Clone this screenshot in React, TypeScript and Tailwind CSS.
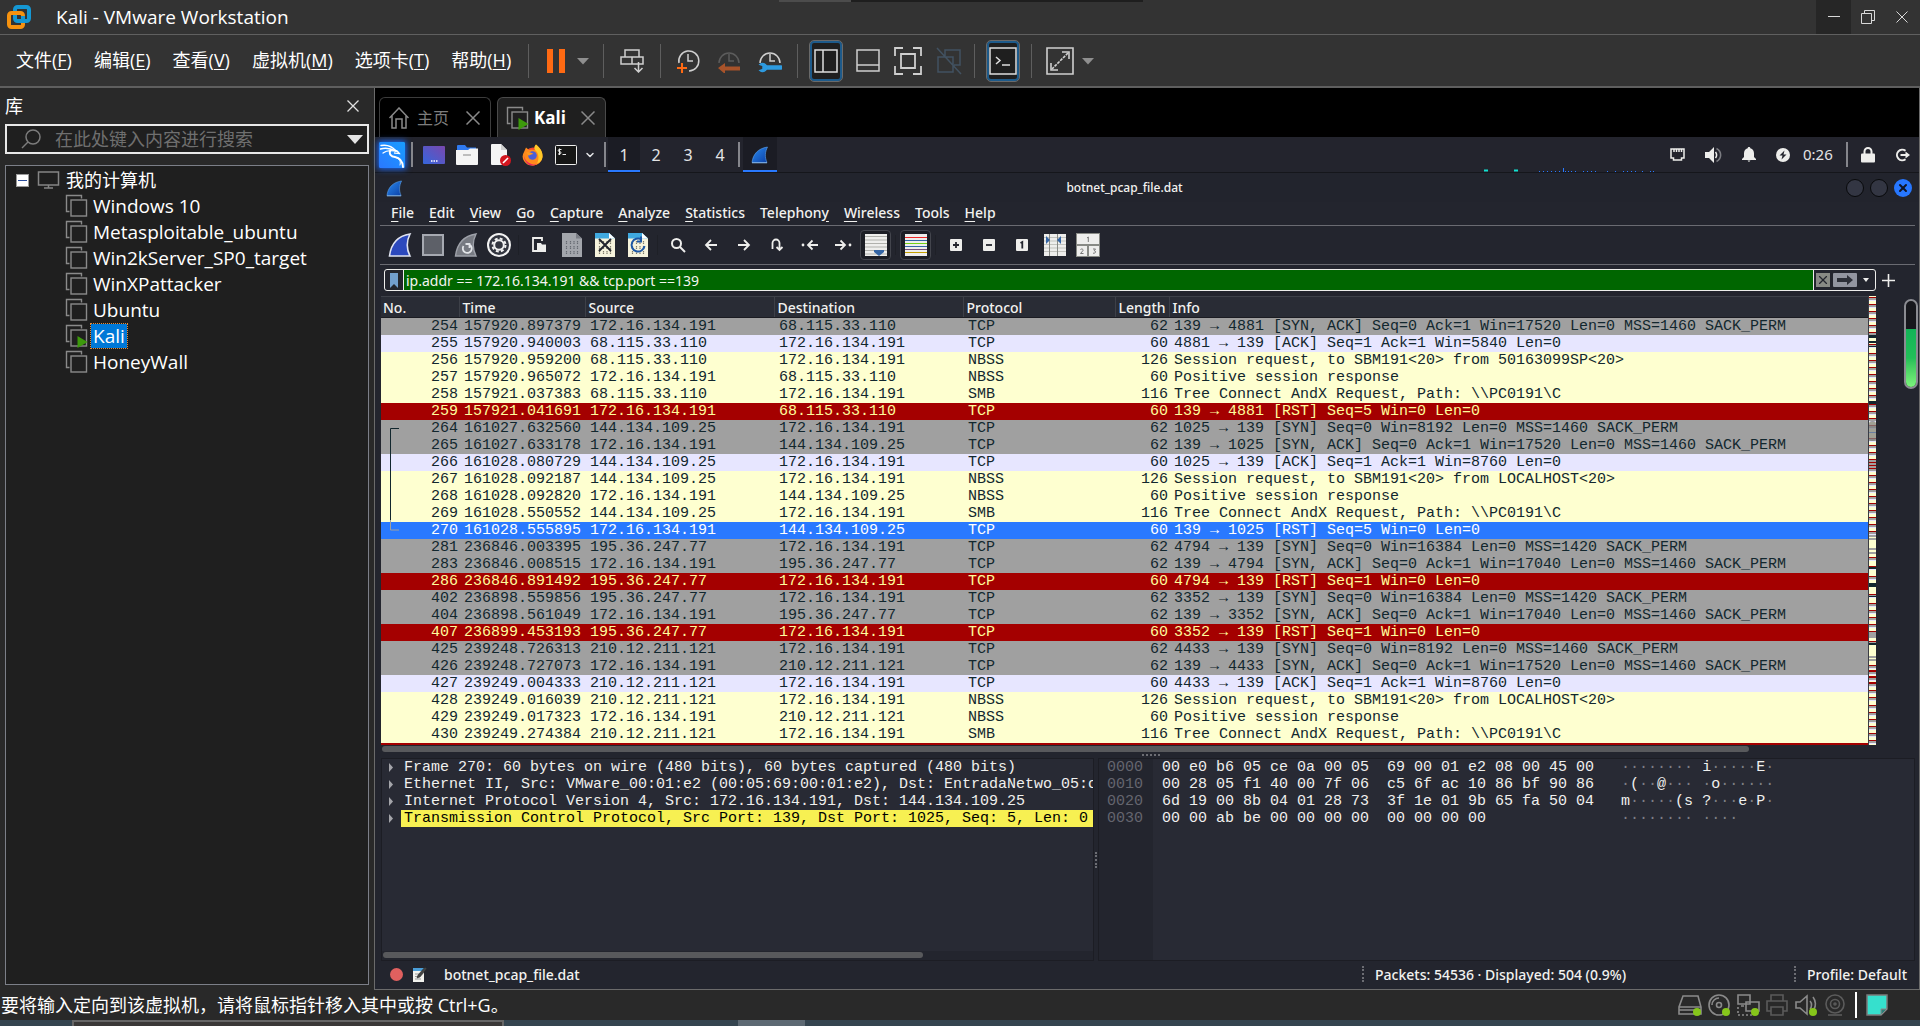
import React from 'react';
import { ChevronDown, X } from 'lucide-react';

const KALI_FONT = "font-['Noto_Sans',sans-serif]";
const MONO_FONT = "font-['Liberation_Mono',monospace] text-[15px] leading-[17px]";

type Tone = 'gray' | 'lavender' | 'cream' | 'red' | 'selected';

const TONES: Record<Tone, string> = {
  gray: 'bg-[#a0a0a0] text-[#12272e]',
  lavender: 'bg-[#e7e6ff] text-[#12272e]',
  cream: 'bg-[#feffd0] text-[#12272e]',
  red: 'bg-[#a40000] text-[#fffc9c]',
  selected: 'bg-[#2979ff] text-white',
};

type Packet = [number, string, string, string, string, number, string, Tone];

const A = '172.16.134.191';
const B = '68.115.33.110';
const C = '144.134.109.25';
const D = '195.36.247.77';
const E = '210.12.211.121';

const PACKETS: Packet[] = [
  [254, '157920.897379', A, B, 'TCP', 62, '139 → 4881 [SYN, ACK] Seq=0 Ack=1 Win=17520 Len=0 MSS=1460 SACK_PERM', 'gray'],
  [255, '157920.940003', B, A, 'TCP', 60, '4881 → 139 [ACK] Seq=1 Ack=1 Win=5840 Len=0', 'lavender'],
  [256, '157920.959200', B, A, 'NBSS', 126, 'Session request, to SBM191<20> from 50163099SP<20>', 'cream'],
  [257, '157920.965072', A, B, 'NBSS', 60, 'Positive session response', 'cream'],
  [258, '157921.037383', B, A, 'SMB', 116, 'Tree Connect AndX Request, Path: \\\\PC0191\\C', 'cream'],
  [259, '157921.041691', A, B, 'TCP', 60, '139 → 4881 [RST] Seq=5 Win=0 Len=0', 'red'],
  [264, '161027.632560', C, A, 'TCP', 62, '1025 → 139 [SYN] Seq=0 Win=8192 Len=0 MSS=1460 SACK_PERM', 'gray'],
  [265, '161027.633178', A, C, 'TCP', 62, '139 → 1025 [SYN, ACK] Seq=0 Ack=1 Win=17520 Len=0 MSS=1460 SACK_PERM', 'gray'],
  [266, '161028.080729', C, A, 'TCP', 60, '1025 → 139 [ACK] Seq=1 Ack=1 Win=8760 Len=0', 'lavender'],
  [267, '161028.092187', C, A, 'NBSS', 126, 'Session request, to SBM191<20> from LOCALHOST<20>', 'cream'],
  [268, '161028.092820', A, C, 'NBSS', 60, 'Positive session response', 'cream'],
  [269, '161028.550552', C, A, 'SMB', 116, 'Tree Connect AndX Request, Path: \\\\PC0191\\C', 'cream'],
  [270, '161028.555895', A, C, 'TCP', 60, '139 → 1025 [RST] Seq=5 Win=0 Len=0', 'selected'],
  [281, '236846.003395', D, A, 'TCP', 62, '4794 → 139 [SYN] Seq=0 Win=16384 Len=0 MSS=1420 SACK_PERM', 'gray'],
  [283, '236846.008515', A, D, 'TCP', 62, '139 → 4794 [SYN, ACK] Seq=0 Ack=1 Win=17040 Len=0 MSS=1460 SACK_PERM', 'gray'],
  [286, '236846.891492', D, A, 'TCP', 60, '4794 → 139 [RST] Seq=1 Win=0 Len=0', 'red'],
  [402, '236898.559856', D, A, 'TCP', 62, '3352 → 139 [SYN] Seq=0 Win=16384 Len=0 MSS=1420 SACK_PERM', 'gray'],
  [404, '236898.561049', A, D, 'TCP', 62, '139 → 3352 [SYN, ACK] Seq=0 Ack=1 Win=17040 Len=0 MSS=1460 SACK_PERM', 'gray'],
  [407, '236899.453193', D, A, 'TCP', 60, '3352 → 139 [RST] Seq=1 Win=0 Len=0', 'red'],
  [425, '239248.726313', E, A, 'TCP', 62, '4433 → 139 [SYN] Seq=0 Win=8192 Len=0 MSS=1460 SACK_PERM', 'gray'],
  [426, '239248.727073', A, E, 'TCP', 62, '139 → 4433 [SYN, ACK] Seq=0 Ack=1 Win=17520 Len=0 MSS=1460 SACK_PERM', 'gray'],
  [427, '239249.004333', E, A, 'TCP', 60, '4433 → 139 [ACK] Seq=1 Ack=1 Win=8760 Len=0', 'lavender'],
  [428, '239249.016039', E, A, 'NBSS', 126, 'Session request, to SBM191<20> from LOCALHOST<20>', 'cream'],
  [429, '239249.017323', A, E, 'NBSS', 60, 'Positive session response', 'cream'],
  [430, '239249.274384', E, A, 'SMB', 116, 'Tree Connect AndX Request, Path: \\\\PC0191\\C', 'cream'],
];

const DETAILS = [
  'Frame 270: 60 bytes on wire (480 bits), 60 bytes captured (480 bits)',
  'Ethernet II, Src: VMware_00:01:e2 (00:05:69:00:01:e2), Dst: EntradaNetwo_05:c',
  'Internet Protocol Version 4, Src: 172.16.134.191, Dst: 144.134.109.25',
  'Transmission Control Protocol, Src Port: 139, Dst Port: 1025, Seq: 5, Len: 0',
];

const HEX = [
  { offset: '0000', bytes: '00 e0 b6 05 ce 0a 00 05  69 00 01 e2 08 00 45 00', ascii: '········ i·····E·' },
  { offset: '0010', bytes: '00 28 05 f1 40 00 7f 06  c5 6f ac 10 86 bf 90 86', ascii: '·(··@··· ·o······' },
  { offset: '0020', bytes: '6d 19 00 8b 04 01 28 73  3f 1e 01 9b 65 fa 50 04', ascii: 'm·····(s ?···e·P·' },
  { offset: '0030', bytes: '00 00 ab be 00 00 00 00  00 00 00 00', ascii: '········ ····' },
];

const MACHINES = ['Windows 10', 'Metasploitable_ubuntu', 'Win2kServer_SP0_target', 'WinXPattacker', 'Ubuntu', 'Kali', 'HoneyWall'];

const VM_MENU = [
  ['文件', 'F'],
  ['编辑', 'E'],
  ['查看', 'V'],
  ['虚拟机', 'M'],
  ['选项卡', 'T'],
  ['帮助', 'H'],
];

// [before, accelerator, after]
const SHARK_MENU = [
  ['', 'F', 'ile'],
  ['', 'E', 'dit'],
  ['', 'V', 'iew'],
  ['', 'G', 'o'],
  ['', 'C', 'apture'],
  ['', 'A', 'nalyze'],
  ['', 'S', 'tatistics'],
  ['Telephon', 'y', ''],
  ['', 'W', 'ireless'],
  ['', 'T', 'ools'],
  ['', 'H', 'elp'],
];

/* ---------- icons ---------- */

const VmIcon = ({ running = false }: { running?: boolean }) => (
  <svg width="24" height="24" viewBox="0 0 24 24" fill="none" stroke="#8a8a8a" strokeWidth="1.4">
    <path d="M4.5 17.5H1.5V1.5h15v3" />
    <rect x="6" y="6" width="15.5" height="16" fill="#1f1f1f" />
    {running && <path d="M12.5 12v12l10-6z" fill="#3d9a0c" stroke="none" />}
  </svg>
);

const Fin = ({ size = 18, from = '#2b8cf0', to = '#0b3fa5' }: { size?: number; from?: string; to?: string }) => {
  const id = 'fin' + size;
  return (
    <svg width={size} height={size} viewBox="0 0 18 18">
      <defs>
        <linearGradient id={id} x1="0" y1="0" x2="1" y2="1">
          <stop offset="0" stopColor={from} />
          <stop offset="1" stopColor={to} />
        </linearGradient>
      </defs>
      <path d="M1 16.5C2 8 7 2.500 16.500 1C14 6 13.500 11 16 16.500Z" fill={`url(#${id})`} stroke="#5fa4ee" strokeWidth=".6" />
      <path d="M1 16.800h15" stroke="#9cc9f7" strokeWidth=".8" />
    </svg>
  );
};

const KaliLogo = () => (
  <svg width="26" height="26" viewBox="0 0 26 26" className="shadow-[0_0_6px_1px_#1c6cff]">
    <defs>
      <linearGradient id="kali" x1="0" y1="1" x2="1" y2="0">
        <stop offset="0" stopColor="#2a78ff" />
        <stop offset="1" stopColor="#189cff" />
      </linearGradient>
    </defs>
    <rect width="26" height="26" rx="1" fill="url(#kali)" />
    <g fill="none" stroke="#fff" strokeLinecap="round">
      <path d="M2 3.500C8 2.500 13 4 17 9" strokeWidth="1.400" />
      <path d="M1.500 7C6 5.500 11 6 17 9" strokeWidth="1.400" />
      <path d="M4 11C7 8.500 11 8 16 9" strokeWidth="1.200" />
      <path d="M15 8C17.500 8.500 19 9 20.500 11.500C19 11.500 17 11.200 15.500 11" strokeWidth="1.300" />
      <path d="M11.500 8C9.500 12 12 14.500 16 15C21 15.800 23.500 19 24 25" strokeWidth="1.900" />
      <path d="M17 15.500C21 17 22 20 21 23" strokeWidth="1" />
    </g>
  </svg>
);

const VmwareLogo = () => (
  <svg width="26" height="26" viewBox="0 0 26 26" fill="none" strokeWidth="4">
    <rect x="9" y="3" width="14" height="14" rx="2.500" stroke="#1597d3" />
    <rect x="3" y="9" width="14" height="14" rx="2.500" stroke="#f6920f" />
    <path d="M9 13.500V9" stroke="#1597d3" />
    <path d="M7 9h7" stroke="#f6920f" />
    <path d="M17 12v5h-4" stroke="#1597d3" />
  </svg>
);

const Clock = ({ dim = false, arc = false, children }: { dim?: boolean; arc?: boolean; children: React.ReactNode }) => (
  <svg width="24" height="24" viewBox="0 0 24 24" fill="none" stroke={dim ? '#5c5c5c' : '#cfcfcf'} strokeWidth="1.500">
    {arc ? <path d="M2 14A10 10 0 1 1 22 14" /> : <path d="M3 14A10 10 0 1 1 13 22" />}
    <path d="M12 5v7h5" />
    {children}
  </svg>
);

const Caret = () => (
  <svg width="12" height="8" viewBox="0 0 12 8">
    <path d="M0 1h12L6 7.500z" fill="#8f8f8f" />
  </svg>
);

const Firefox = () => (
  <svg width="22" height="22" viewBox="0 0 22 22">
    <circle cx="11" cy="12.500" r="9" fill="#f5452f" />
    <path d="M2 8L4 3.500L7 6C9 5 11 5.500 13 6C12 4 12.500 2 14 .500C17 3 21 7 20.500 13A9.500 9 0 0 1 11 21.500A9.500 9 0 0 1 2 8Z" fill="#ff8a1c" />
    <path d="M14 .500C17 3 21 7 20.500 13C20 17 17 19 15 19.500C18 14 16 8 13 6C12 4 12.500 2 14 .500Z" fill="#ffc928" />
    <path d="M1.700 11C3 18 9 21 14.500 20.500C10 23 2.500 21 1.700 11Z" fill="#e8265f" />
    <circle cx="10.500" cy="11.500" r="4.300" fill="#4a5fd8" />
    <path d="M4 8.500C7 8 9.500 8.500 11.500 10C9 10 8.500 11.500 6.500 11.500Z" fill="#ff9a20" />
  </svg>
);

const Desktop = () => (
  <svg width="22" height="18" viewBox="0 0 22 18">
    <defs>
      <linearGradient id="desk" x1="0" y1="1" x2="1" y2="0">
        <stop offset="0" stopColor="#3566dc" />
        <stop offset="1" stopColor="#7a48ae" />
      </linearGradient>
    </defs>
    <rect width="22" height="18" rx="1" fill="url(#desk)" />
    <path d="M8 15h1.500M10.500 15H12M13 15h1.500" stroke="#fff" strokeWidth="1.400" />
  </svg>
);

const Folder = () => (
  <svg width="22" height="20" viewBox="0 0 22 20">
    <path d="M1 1a1 1 0 0 1 1-1h7l2 2.500h9v6H1z" fill="#2f7af0" />
    <path d="M0 5h12l2-1.500h8V19a1 1 0 0 1-1 1H1a1 1 0 0 1-1-1z" fill="#f4f4f4" />
    <path d="M7 10h8" stroke="#bdbdbd" strokeWidth="2" />
  </svg>
);

const Doc = () => (
  <svg width="22" height="22" viewBox="0 0 22 22">
    <path d="M2 1a1 1 0 0 1 1-1h9l6 6v15H3a1 1 0 0 1-1-1z" fill="#f5f5f5" />
    <path d="M12 0l6 6h-6z" fill="#cfcfcf" />
    <circle cx="16.500" cy="16.500" r="5.500" fill="#d3161f" />
    <path d="M14 19l5-5" stroke="#fff" strokeWidth="1.600" />
  </svg>
);

const Terminal = () => (
  <svg width="22" height="20" viewBox="0 0 22 20" fill="none" stroke="#eee">
    <rect x=".5" y=".5" width="21" height="19" rx="1" fill="#161616" />
    <path d="M6.500 4.500H4c-1 0-1 2 0 2h1c1.200 0 1.200 2.500 0 2.500H3M4.500 3.500v6.500M7.500 9.500H11" strokeWidth="1" />
  </svg>
);

const BinaryDoc = ({ dim = false, children }: { dim?: boolean; children?: React.ReactNode }) => (
  <svg width="20" height="24" viewBox="0 0 20 24">
    <path d="M0 0h14l6 5.500V24H0z" fill={dim ? '#a3a6ac' : '#f6f3dc'} />
    {!dim && <path d="M0 0h14l6 5.500H0z" fill="#3fa9e0" />}
    <path d="M14 0v5.500h6z" fill={dim ? '#7b7e86' : '#fff'} />
    {[9.5, 14.5, 19.5].map(y => (
      <path key={y} d={`M4.500 ${y - 1.5}v3M8.500 ${y - 1.5}v3M12 ${y - 1.5}v3M15.500 ${y - 1.5}v3`} stroke={dim ? '#666a72' : '#7d7a6a'} strokeWidth="1.200" strokeDasharray="1.600 .500" />
    ))}
    {children}
  </svg>
);

const Arrow = ({ d, dot }: { d: string; dot?: number }) => (
  <svg width="18" height="16" viewBox="0 0 18 16" fill="none" stroke="#eeeeec" strokeWidth="1.800">
    <path d={d} />
    {dot !== undefined && <circle cx={dot} cy="8" r="1.400" fill="#eeeeec" stroke="none" />}
  </svg>
);

const Square = ({ d }: { d: string }) => (
  <svg width="12" height="12" viewBox="0 0 12 12">
    <rect width="12" height="12" rx="1" fill="#eeeeec" />
    <path d={d} stroke="#23252e" strokeWidth="1.800" fill="none" />
  </svg>
);

const LED = () => <circle cx="19" cy="19" r="4" fill="#86c61b" stroke="none" />;

const Device = ({ dim = false, led = true, children }: { dim?: boolean; led?: boolean; children: React.ReactNode }) => (
  <svg width="24" height="24" viewBox="0 0 24 24" fill="none" stroke={dim ? '#5b5b5b' : '#8a8a8a'} strokeWidth="1.600">
    {children}
    {led && <LED />}
  </svg>
);

const TOOLBAR_ICONS: { name: string; icon: React.ReactNode; boxed?: boolean; divided?: boolean }[] = [
  {
    name: 'Start capture',
    icon: (
      <svg width="24" height="24" viewBox="0 0 24 24">
        <path d="M1.500 23C3 11 9 3 22 1C18.500 8 18.500 16 22 23Z" fill="#2c49bd" stroke="#dfe3f0" strokeWidth="1.600" />
      </svg>
    ),
  },
  {
    name: 'Stop capture',
    icon: (
      <svg width="22" height="22" viewBox="0 0 22 22">
        <rect x="1" y="1" width="20" height="20" fill="#5d6068" stroke="#a6a9b1" strokeWidth="2" />
      </svg>
    ),
  },
  {
    name: 'Restart capture',
    icon: (
      <svg width="24" height="24" viewBox="0 0 24 24">
        <path d="M1.500 23C3 11 9 3 22 1C18.500 8 18.500 16 22 23Z" fill="#777a82" stroke="#9ea1a9" strokeWidth="1.400" />
        <path d="M9.500 13a4.500 4.500 0 1 0 6-1.500M15.500 15v-4h-4" fill="none" stroke="#e2e4e8" strokeWidth="1.800" />
      </svg>
    ),
  },
  {
    name: 'Capture options',
    icon: (
      <svg width="24" height="24" viewBox="0 0 24 24">
        <circle cx="12" cy="12" r="11" fill="#333640" stroke="#f2f2f2" strokeWidth="2" />
        <circle cx="12" cy="12" r="6.500" fill="none" stroke="#f2f2f2" strokeWidth="2" strokeDasharray="2.900 2.200" />
        <circle cx="12" cy="12" r="4.800" fill="#333640" stroke="#f2f2f2" strokeWidth="2" />
      </svg>
    ),
  },
  {
    name: 'Open',
    divided: true,
    icon: (
      <svg width="16" height="16" viewBox="0 0 16 16">
        <path d="M11 4V1H2v13h4" fill="none" stroke="#eeeeec" strokeWidth="1.800" />
        <path d="M6 6h4l1 1.500h4V15H6z" fill="#eeeeec" />
      </svg>
    ),
  },
  { name: 'Save', icon: <BinaryDoc dim /> },
  {
    name: 'Close file',
    icon: (
      <BinaryDoc>
        <path d="M4 6l12 12M16 6L4 18" stroke="#23252e" strokeWidth="2" />
      </BinaryDoc>
    ),
  },
  {
    name: 'Reload',
    icon: (
      <BinaryDoc>
        <path d="M13.500 6.500A6.500 6.500 0 1 0 16.500 13M13 3.500v5h-4" fill="none" stroke="#1c57a5" strokeWidth="2" />
      </BinaryDoc>
    ),
  },
  {
    name: 'Find',
    divided: true,
    icon: (
      <svg width="16" height="16" viewBox="0 0 16 16" fill="none" stroke="#eeeeec" strokeWidth="2">
        <circle cx="6.500" cy="6.500" r="4.500" />
        <path d="M10 10l5 5" />
      </svg>
    ),
  },
  { name: 'Back', icon: <Arrow d="M15 8H4M9 3L4 8l5 5" /> },
  { name: 'Forward', icon: <Arrow d="M3 8h11M9 3l5 5-5 5" /> },
  { name: 'Go to packet', icon: <Arrow d="M4.500 12V6a3.500 3.500 0 0 1 7 0v7M8.500 10l3 3 3-3" /> },
  { name: 'First packet', icon: <Arrow d="M17 8H7M11.500 3.500L7 8l4.500 4.500" dot={2} /> },
  { name: 'Last packet', icon: <Arrow d="M1 8h10M6.500 3.500L11 8l-4.500 4.500" dot={16} /> },
  {
    name: 'Auto scroll',
    boxed: true,
    icon: (
      <svg width="22" height="22" viewBox="0 0 22 22">
        <rect width="22" height="22" fill="#eeeeec" />
        <path d="M0 2.500h22M0 6h22M0 9.500h22M0 13h22M0 16.500h22M0 20h22" stroke="#b0b1ac" />
        <path d="M9 16h10v2l-5 4-5-4z" fill="#3465a4" />
      </svg>
    ),
  },
  {
    name: 'Colorize',
    boxed: true,
    divided: true,
    icon: (
      <svg width="22" height="22" viewBox="0 0 22 22">
        <rect width="22" height="22" fill="#eeeeec" />
        <path d="M0 3.500h22" stroke="#ef2929" />
        <path d="M0 6.500h22M0 12.500h22" stroke="#3465a4" />
        <path d="M0 9.500h22" stroke="#73d216" />
        <path d="M0 15.500h22" stroke="#75507b" />
        <path d="M0 18.500h22" stroke="#c4a000" />
      </svg>
    ),
  },
  { name: 'Zoom in', divided: true, icon: <Square d="M3 6h6M6 3v6" /> },
  { name: 'Zoom out', icon: <Square d="M3 6h6" /> },
  { name: 'Normal size', icon: <Square d="M4.500 4L6.300 3v6.500" /> },
  {
    name: 'Resize columns',
    icon: (
      <svg width="22" height="22" viewBox="0 0 22 22">
        <rect width="22" height="22" fill="#eeeeec" />
        <path d="M0 3.500h22M0 7h22M0 10.500h22M0 14h22M0 17.500h22" stroke="#c2c3be" />
        <path d="M5.500 0v22M13.500 0v22" stroke="#888a85" />
        <path d="M2 2l4 4-4 4zM17 2l-4 4 4 4z" fill="#3465a4" />
      </svg>
    ),
  },
  {
    name: 'Layout',
    icon: (
      <svg width="24" height="24" viewBox="0 0 24 24">
        <rect width="24" height="24" fill="#888a85" />
        <path d="M1 1h22v10H1zM1 13h10v10H1zM13 13h10v10H13z" fill="#eeeeec" />
        <path d="M11 5l1.300-1v5M4.500 16.500c1-1 3-.500 2.500 1L4.500 20.500h3M17 16h2.500l-1.300 1.700c2 0 2 3-1.200 2.500" fill="none" stroke="#777" />
      </svg>
    ),
  },
];

/* ---------- VMware chrome ---------- */

const TitleBar = () => (
  <header className="relative flex h-[35px] items-center border-b border-[#606060] bg-[#333333] pl-[6px]">
    <div className="absolute left-[779px] top-0 flex h-[2px] w-[364px] bg-[#1e1e1e]">
      <div className="w-[72px] bg-[#4c4c4c]" />
    </div>
    <VmwareLogo />
    <h1 className="ml-6 flex-1 text-[19px]">Kali - VMware Workstation</h1>
    <button aria-label="Minimize" className="flex h-full w-[35px] items-center justify-center bg-[#262626]">
      <svg width="12" height="12" viewBox="0 0 12 12" stroke="#d8d8d8"><path d="M0 5.500h12" /></svg>
    </button>
    <button aria-label="Restore" className="flex h-full w-[33px] items-center justify-center">
      <svg width="14" height="14" viewBox="0 0 14 14" fill="none" stroke="#d8d8d8">
        <path d="M.5 3.500h10v10H.5zM3.500 3.500v-3h10v10h-3" />
      </svg>
    </button>
    <button aria-label="Close" className="flex h-full w-9 items-center justify-center">
      <svg width="12" height="12" viewBox="0 0 12 12" stroke="#d8d8d8"><path d="M.5.5l11 11M11.500.5l-11 11" /></svg>
    </button>
  </header>
);

const Divider = () => <div className="h-[34px] w-px bg-[#5e5e5e]" />;

const VmToolbar = () => (
  <div className="flex h-[53px] items-center border-b-2 border-[#5f5f5f] bg-[#333333]">
    <nav className="flex gap-[22px] pl-4 pr-[17px]">
      {VM_MENU.map(([label, key]) => (
        <button key={key} className="whitespace-nowrap pb-[2px] text-[18px] leading-[24px]">
          {label}(<span className="underline underline-offset-2">{key}</span>)
        </button>
      ))}
    </nav>
    <Divider />
    <div className="flex items-center gap-3 pl-[18px] pr-[14px]">
      <button aria-label="Suspend">
        <svg width="18" height="24" viewBox="0 0 18 24"><path d="M0 0h6v24H0zM12 0h6v24h-6z" fill="#ff6a13" /></svg>
      </button>
      <button aria-label="Power options"><Caret /></button>
    </div>
    <Divider />
    <div className="flex items-center px-4">
      <button aria-label="Send keys">
        <svg width="24" height="24" viewBox="0 0 24 24" fill="none" stroke="#cfcfcf" strokeWidth="1.500">
          <path d="M5 1h14v7H5zM1 8h11v7H1zM12 8h11v7H12zM18.500 13v10M14.500 19l4 4 4-4" />
        </svg>
      </button>
    </div>
    <Divider />
    <div className="flex items-center gap-[17px] px-[15px]">
      <button aria-label="Take snapshot">
        <Clock><path d="M6 14v10M1 19h10" stroke="#ff6a13" strokeWidth="2" /></Clock>
      </button>
      <button aria-label="Revert snapshot">
        <Clock dim arc><path d="M1 19l7-5v3.500h15v4H8V25z" fill="#a8532a" stroke="none" /></Clock>
      </button>
      <button aria-label="Manage snapshots">
        <Clock arc>
          <path d="M8 18.500h15" stroke="#2e9be0" strokeWidth="4.500" strokeLinecap="round" />
          <path d="M2 15.500a4 4 0 1 1 0 6l3-1v-4z" fill="#2e9be0" stroke="#2e9be0" />
        </Clock>
      </button>
    </div>
    <Divider />
    <div className="flex items-center gap-[14px] px-3">
      <button aria-label="Show library" className="flex h-10 w-8 items-center justify-center rounded-sm border-2 border-[#1d5a8a] bg-[#1f1f1f] outline outline-1 outline-[#6a6a6a]">
        <svg width="24" height="24" viewBox="0 0 24 24" fill="none" stroke="#dedede" strokeWidth="1.500"><path d="M1 1h22v22H1zM9 1v22" /></svg>
      </button>
      <button aria-label="Show thumbnails">
        <svg width="24" height="24" viewBox="0 0 24 24" fill="none" stroke="#cfcfcf" strokeWidth="1.500"><path d="M1 1h22v21H1zM1 16h22" /></svg>
      </button>
      <button aria-label="Full screen">
        <svg width="28" height="28" viewBox="0 0 28 28" fill="none" stroke="#cfcfcf" strokeWidth="1.800">
          <path d="M1 9V1h8M19 1h8v8M27 19v8h-8M9 27H1v-8M7 7h14v14H7z" />
        </svg>
      </button>
      <button aria-label="Unity mode" disabled>
        <svg width="26" height="28" viewBox="0 0 26 28" fill="none" stroke="#425261" strokeWidth="1.500">
          <path d="M9 9V3h15v15h-6M2 10h15v15H2zM1 1l24 26" />
        </svg>
      </button>
    </div>
    <Divider />
    <div className="flex items-center px-3">
      <button aria-label="Console" className="flex h-10 w-8 items-center justify-center rounded-sm border-2 border-[#1d5a8a] bg-[#1f1f1f] outline outline-1 outline-[#6a6a6a]">
        <svg width="28" height="28" viewBox="0 0 28 28" fill="none" stroke="#dedede" strokeWidth="1.500">
          <path d="M1 1h26v26H1zM7 10l4 3.500L7 17M13 18h8" />
        </svg>
      </button>
    </div>
    <Divider />
    <div className="flex items-center gap-2 px-[14px]">
      <button aria-label="Stretch guest">
        <svg width="28" height="28" viewBox="0 0 28 28" fill="none" stroke="#cfcfcf" strokeWidth="1.600">
          <path d="M1 1h26v26H1zM16 5h7v7M12 23H5v-7" />
          <path d="M22 6L6 22" strokeDasharray="3 1" />
        </svg>
      </button>
      <button aria-label="Stretch options"><Caret /></button>
    </div>
  </div>
);

const Library = () => (
  <aside className="flex w-[374px] shrink-0 flex-col bg-[#292929] pb-[5px] pl-[5px] pr-[5px]">
    <div className="flex h-[36px] items-center justify-between pr-[10px] text-[18px]">
      <h2>库</h2>
      <button aria-label="关闭">
        <svg width="12" height="12" viewBox="0 0 12 12" stroke="#e0e0e0" strokeWidth="1.300"><path d="M.5.5l11 11M11.500.5l-11 11" /></svg>
      </button>
    </div>
    <div className="flex h-[30px] items-center border-2 border-[#e8e8e8] bg-[#1f1f1f] pl-[14px] pr-1">
      <svg width="20" height="20" viewBox="0 0 20 20" fill="none" stroke="#7c7c7c" strokeWidth="1.500">
        <circle cx="12" cy="8" r="7" />
        <path d="M7 13l-6 6" />
      </svg>
      <input aria-label="搜索" placeholder="在此处键入内容进行搜索" className="ml-[14px] min-w-0 flex-1 bg-transparent text-[18px] leading-[24px] outline-none placeholder:text-[#6f6f6f]" />
      <button aria-label="搜索选项">
        <svg width="16" height="9" viewBox="0 0 16 9"><path d="M0 0h16L8 9z" fill="#e4e4e4" /></svg>
      </button>
    </div>
    <div className="mt-[11px] flex-1 border border-[#7c7f88] bg-[#1f1f1f] pt-px">
      <div className="flex h-[26px] items-center pl-[10px] text-[18px]">
        <button aria-label="折叠" className="mr-2 flex size-[13px] items-center justify-center border border-[#9a9a9a] bg-white">
          <span className="h-px w-[9px] bg-[#2b4d9b]" />
        </button>
        <svg width="24" height="18" viewBox="0 0 24 18" fill="none" stroke="#858585" strokeWidth="1.500">
          <path d="M1.500 1h20v13h-20zM11.500 14v3M7 17h9" />
        </svg>
        <span className="ml-[5px]">我的计算机</span>
      </div>
      <ul>
        {MACHINES.map(name => (
          <li key={name} className="flex h-[26px] items-center pl-[59px]">
            <VmIcon running={name === 'Kali'} />
            <button className={`ml-[2px] px-[2px] text-[19px] leading-[24px] ${name === 'Kali' ? 'bg-[#0078d7] outline-dotted outline-1 outline-[#e08a3a]' : ''}`}>
              {name}
            </button>
          </li>
        ))}
      </ul>
    </div>
  </aside>
);

const TabClose = () => (
  <svg width="14" height="14" viewBox="0 0 14 14" stroke="#8a8a8a" strokeWidth="1.500"><path d="M.5.5l13 13M13.500.5l-13 13" /></svg>
);

const VmTabs = () => (
  <div className="flex h-[49px] items-end gap-[6px] bg-black pl-1" role="tablist">
    <div className="flex h-10 w-[112px] items-center rounded-t-md border border-b-0 border-[#3c3c3c] pl-[9px] pr-[10px]">
      <svg width="20" height="22" viewBox="0 0 20 22" fill="none" stroke="#8a8a8a" strokeWidth="1.500">
        <path d="M.5 11L10 1l9.500 10M3 9v12h4v-9h6v9h4V9" />
      </svg>
      <button role="tab" className="ml-2 flex-1 text-left text-[16px] text-[#7d7d7d]">主页</button>
      <button aria-label="关闭主页"><TabClose /></button>
    </div>
    <div className="flex h-10 w-[109px] items-center rounded-t-md border border-b-0 border-[#4a4a4a] bg-[#1f1f1f] pl-2 pr-[10px]">
      <VmIcon running />
      <button role="tab" className="ml-1 flex-1 text-left text-[17px] font-bold">Kali</button>
      <button aria-label="关闭 Kali"><TabClose /></button>
    </div>
  </div>
);

/* ---------- Kali desktop ---------- */

const PanelRule = () => <div className="h-[25px] w-[2px] bg-[#85868c]" />;

const ACTIVITY = [0, 4, 8, 12, 16, 20, 26, 29, 32, 36, 44, 48, 52, 56, 68, 76, 84, 88, 92, 96, 103, 111, 114];

const KaliPanel = () => (
  <div className="relative flex h-[35px] items-center bg-[#23242d] pl-1 text-[16px] text-[#e3e4e6]">
    <button aria-label="Applications" className="flex"><KaliLogo /></button>
    <div className="ml-[6px]"><PanelRule /></div>
    <div className="flex items-center gap-[11px] pl-[10px] pr-[7px]">
      <button aria-label="Show desktop"><Desktop /></button>
      <button aria-label="Files"><Folder /></button>
      <button aria-label="Text editor"><Doc /></button>
      <button aria-label="Firefox"><Firefox /></button>
      <button aria-label="Terminal"><Terminal /></button>
    </div>
    <button aria-label="More terminals" className="mr-2"><ChevronDown size={12} strokeWidth={3} /></button>
    <PanelRule />
    <div className="flex h-full px-[2px]">
      {['1', '2', '3', '4'].map(n => (
        <button key={n} className={`w-8 border-y-2 border-t-transparent ${n === '1' ? 'border-b-[#2979ff] bg-[#1b1c24]' : 'border-b-transparent'}`}>
          {n}
        </button>
      ))}
    </div>
    <PanelRule />
    <button aria-label="botnet_pcap_file.dat" className="ml-[3px] flex h-full w-[34px] items-center justify-center border-y-2 border-b-[#2979ff] border-t-transparent bg-[#1b1c24]">
      <Fin size={18} />
    </button>
    <svg width="170" height="4" viewBox="0 0 170 4" className="absolute bottom-0 right-[265px]">
      <path d="M0 2.500h4M30 2.500h4" stroke="#12e0d0" strokeWidth="2" />
      <path d="M79.500 0v4" stroke="#2979ff" />
      {ACTIVITY.map(x => <rect key={x} x={55 + x} y="3" width="1" height="1" fill="#2979ff" />)}
    </svg>
    <div className="ml-auto flex items-center gap-[20px] pr-[14px]">
      <svg width="15" height="13" viewBox="0 0 15 13" fill="none" stroke="#eeeeec" strokeWidth="1.500">
        <path d="M1 1h13v9h-2.500v2h-8v-2H1zM4 1v3M6.500 1v3M9 1v3M11.500 1v3" />
      </svg>
      <svg width="17" height="16" viewBox="0 0 17 16">
        <path d="M0 5h4l5-5v16l-5-5H0z" fill="#eeeeec" />
        <path d="M10.500 5c1.500 2 1.500 4 0 6" fill="none" stroke="#eeeeec" strokeWidth="1.500" />
        <path d="M11.500 1.500c5.500 3 5.500 10 0 13" fill="none" stroke="#7b7c82" strokeWidth="1.600" />
      </svg>
      <svg width="14" height="15" viewBox="0 0 14 15" fill="#eeeeec">
        <path d="M7 0c1 0 1.300.7 1.300 1.300C11 2 12 4 12 6.500V10l2 2v1H0v-1l2-2V6.500C2 4 3 2 5.700 1.300C5.700.7 6 0 7 0zM5.500 13.500h3L7 15z" />
      </svg>
      <div className="flex items-center gap-[13px]">
        <svg width="14" height="14" viewBox="0 0 14 14">
          <circle cx="7" cy="7" r="7" fill="#eeeeec" />
          <path d="M8.500 2.500L3.500 7.500h3l-1 4 5-5h-3z" fill="#23242d" />
        </svg>
        <span className="w-[29px] text-[15px]">0:26</span>
      </div>
    </div>
    <PanelRule />
    <div className="flex gap-[20px] pl-[13px] pr-[9px]">
      <button aria-label="Lock">
        <svg width="14" height="16" viewBox="0 0 14 16">
          <path d="M3.500 7V4.500a3.500 3.500 0 0 1 7 0V7" fill="none" stroke="#eeeeec" strokeWidth="2" />
          <rect y="6.500" width="14" height="9" rx="1" fill="#eeeeec" />
        </svg>
      </button>
      <button aria-label="Log out">
        <svg width="15" height="14" viewBox="0 0 15 14" fill="none" stroke="#eeeeec" strokeWidth="2">
          <path d="M10.500 2.800a5.300 5.300 0 1 0 0 8.400M5.500 7h7" />
          <path d="M10.500 3.500L15 7l-4.500 3.500z" fill="#eeeeec" stroke="none" />
        </svg>
      </button>
    </div>
  </div>
);

const SharkTitle = () => (
  <div className="flex h-[30px] items-center border-t border-[#15161b] bg-[#22242d] pl-[11px] pr-[7px] pt-px">
    <Fin size={17} />
    <span className="flex-1 text-center text-[12px] font-medium">botnet_pcap_file.dat</span>
    <div className="flex gap-[6px]">
      <button aria-label="Minimize window" className="size-[18px] rounded-full border border-[#08090b] bg-[#333643]" />
      <button aria-label="Maximize window" className="size-[18px] rounded-full border border-[#08090b] bg-[#333643]" />
      <button aria-label="Close window" className="flex size-[18px] items-center justify-center rounded-full bg-[#2777ff] text-[#101524]">
        <X size={12} strokeWidth={4} />
      </button>
    </div>
  </div>
);

const SharkMenu = () => (
  <nav className="ml-[5px] mr-1 flex h-6 gap-[15px] border-b border-[#6a6b72] pl-[11px] text-[14px] font-medium leading-[20px]">
    {SHARK_MENU.map(([pre, key, post]) => (
      <button key={pre + key + post} className="pb-[2px]">
        {pre}
        <span className="underline underline-offset-[3px]">{key}</span>
        {post}
      </button>
    ))}
  </nav>
);

const SharkToolbar = () => (
  <div className="ml-[5px] mr-1 flex h-[39px] items-center border-b border-[#6a6b72] pl-[3px]">
    {TOOLBAR_ICONS.map(({ name, icon, boxed, divided }) => (
      <React.Fragment key={name}>
        {divided && <div className="mx-[3px] h-5 w-px bg-[#1e2027]" />}
        <button aria-label={name} className="flex h-[33px] w-[33px] items-center justify-center">
          {boxed ? <span className="flex h-[30px] w-[31px] items-center justify-center rounded-sm border border-[#43454d] bg-[#1c1e25]">{icon}</span> : icon}
        </button>
      </React.Fragment>
    ))}
  </div>
);

const FilterBar = () => (
  <div className="flex items-center gap-[6px] pb-[3px] pl-[9px] pt-1">
    <div className="flex h-[22px] flex-1 items-center rounded-[3px] border border-[#eeeeec] bg-[#23252e]">
      <button aria-label="Filter bookmarks" className="flex w-[18px] justify-center">
        <svg width="8" height="15" viewBox="0 0 8 15"><path d="M0 0h8v15l-4-4-4 4z" fill="#729fcf" /></svg>
      </button>
      <input
        aria-label="Display filter"
        defaultValue="ip.addr == 172.16.134.191 && tcp.port ==139"
        className="h-full min-w-0 flex-1 border-x border-[#eeeeec] bg-[#006600] pl-[2px] text-[14px] text-[#f4f4f0] outline-none"
      />
      <button aria-label="Clear filter" className="ml-[2px] flex size-[14px] items-center justify-center bg-[#888a85] text-[#23252e]">
        <X size={14} strokeWidth={2} />
      </button>
      <button aria-label="Apply filter" className="ml-[3px] flex h-[14px] w-6 items-center justify-center rounded-[1px] bg-[#9295a0]">
        <svg width="18" height="10" viewBox="0 0 18 10"><path d="M1 3h10V0l6 5-6 5V7H1z" fill="#2c2f38" /></svg>
      </button>
      <button aria-label="Filter history" className="mx-[6px]">
        <svg width="6" height="4" viewBox="0 0 6 4"><path d="M0 0h6L3 4z" fill="#eeeeec" /></svg>
      </button>
    </div>
    <button aria-label="Add filter button" className="mr-6">
      <svg width="13" height="13" viewBox="0 0 13 13" stroke="#eeeeec" strokeWidth="1.600"><path d="M0 6.500h13M6.500 0v13" /></svg>
    </button>
  </div>
);

const MAP_RED = [
  1, 8, 15, 22, 29, 36, 48, 57, 64, 71, 78, 85, 92, 99, 108, 115, 122, 129, 142, 149, 156, 163, 166, 169, 172, 179, 186, 193,
  200, 207, 214, 221, 228, 235, 261, 270, 280, 298, 307, 314, 321, 328, 335, 345, 369, 374, 375, 380, 381, 386, 387, 394, 401, 409,
  416, 423, 430, 437, 444,
];
const MAP_DARK = [[39, 3], [45, 2], [50, 1], [105, 3], [271, 2], [287, 4], [300, 1], [347, 2]];
const MAP_GRAY = [239, 242, 252, 256, 338, 340, 360, 363];

const MiniMap = () => (
  <svg width="8" height="100%" className="absolute inset-y-0 right-[43px] border-l border-[#3a3c44] bg-[#feffd0]">
    {MAP_RED.map(y => (
      <g key={y}>
        <rect y={y + 1} width="8" height="2" fill="#a0a0a0" />
        <rect y={y + 3} width="8" height="1" fill="#e7e6ff" />
        <rect y={y} width="8" height="1" fill="#a40000" />
      </g>
    ))}
    {MAP_GRAY.map(y => <rect key={y} y={y} width="8" height="2" fill="#a0a0a0" />)}
    {MAP_DARK.map(([y, h]) => <rect key={y} y={y} width="8" height={h} fill="#12272e" />)}
    <rect y="136" width="8" height="1" fill="#2979ff" />
    <rect x="0" y="125" width="7" height="20" rx="3" fill="#808080" fillOpacity=".75" />
  </svg>
);

const PacketList = () => (
  <section className="relative ml-[6px] mt-[2px]">
    <div className="mr-[51px]">
      <table className="w-full table-fixed border-collapse">
        <colgroup>
          <col className="w-[78px]" />
          <col className="w-[126px]" />
          <col className="w-[189px]" />
          <col className="w-[189px]" />
          <col className="w-[152px]" />
          <col className="w-[54px]" />
          <col />
        </colgroup>
        <thead>
          <tr className="h-[21px] bg-[#292c35] text-left text-[14px] leading-[19px]">
            {['No.', 'Time', 'Source', 'Destination', 'Protocol', 'Length', 'Info'].map(h => (
              <th key={h} className="whitespace-nowrap border-y border-l border-b-[#1b1c22] border-l-[#3d4048] border-t-[#3d4048] p-0 pl-[3px] font-medium first:border-l-0 first:pl-[2px]">
                {h}
              </th>
            ))}
          </tr>
        </thead>
        <tbody className={MONO_FONT}>
          {PACKETS.map(([no, time, src, dst, proto, len, info, tone]) => (
            <tr key={no} className={`h-[17px] ${TONES[tone]}`}>
              <td className="p-0 pr-px text-right">{no}</td>
              <td className="p-0 pl-[5px]">{time}</td>
              <td className="p-0 pl-[5px]">{src}</td>
              <td className="p-0 pl-[5px]">{dst}</td>
              <td className="p-0 pl-[5px]">{proto}</td>
              <td className="p-0 pr-px text-right">{len}</td>
              <td className="overflow-hidden whitespace-pre p-0 pl-[5px]">{info}</td>
            </tr>
          ))}
        </tbody>
      </table>
      <div className="h-[2px] bg-[#a40000]" />
    </div>
    <svg width="9" height="104" viewBox="0 0 9 104" fill="none" className="absolute left-[9px] top-[132px]">
      <path d="M9 .5H.5V92" stroke="#12272e" />
      <path d="M.5 92v10H9" stroke="#a0a0a0" />
    </svg>
    <MiniMap />
    <div className="absolute right-px top-[3px] flex h-[90px] w-[14px] flex-col justify-end rounded-full border-2 border-[#8b8c92] bg-[#17181d]">
      <div className="h-[58px] rounded-b-full bg-gradient-to-b from-[#12b457] via-[#22bf58] to-[#7bf57c]" />
    </div>
  </section>
);

const PacketDetails = () => (
  <section className="flex w-[713px] shrink-0 flex-col border border-[#1c1d24] bg-[#282a34]">
    <div className={`flex-1 overflow-hidden ${MONO_FONT}`}>
      {DETAILS.map((line, i) => (
        <button key={line} className="flex h-[17px] w-full items-center overflow-hidden whitespace-pre text-left">
          <svg width="19" height="9" viewBox="0 0 19 9" className="shrink-0"><path d="M7 0l4 4.500L7 9z" fill="#a4a5aa" /></svg>
          <span className={`flex-1 pl-[3px] ${i === 3 ? 'bg-[#f7f052] text-black' : 'text-[#f0f0ee]'}`}>{line}</span>
        </button>
      ))}
    </div>
    <div className="h-[9px] bg-[#23252e] pl-px pt-px">
      <div className="h-[6px] w-[540px] rounded-full bg-[#58595c]" />
    </div>
  </section>
);

const PacketBytes = () => (
  <section className={`flex min-w-0 flex-1 border border-[#1c1d24] bg-[#282a34] ${MONO_FONT}`}>
    <div className="w-[54px] bg-[#23252e] pl-2 text-[#65666e]">
      {HEX.map(row => <div key={row.offset}>{row.offset}</div>)}
    </div>
    <div className="flex gap-[27px] whitespace-pre pl-[9px] text-[#f0f0ee]">
      <div className="w-[432px]">{HEX.map(row => <div key={row.offset}>{row.bytes}</div>)}</div>
      <div>
        {HEX.map(row => (
          <div key={row.offset}>
            {row.ascii.split('').map((ch, i) => (
              <span key={i} className={ch === '·' ? 'text-[#7d7e85]' : ''}>{ch}</span>
            ))}
          </div>
        ))}
      </div>
    </div>
  </section>
);

const Grip = () => <div className="h-4 border-l-2 border-dotted border-[#6c6d73]" />;

const SharkStatus = () => (
  <footer className="flex h-7 items-center pb-[2px] pl-[15px] pr-3 text-[14px] font-medium">
    <button aria-label="Expert information" className="size-[13px] rounded-full bg-[#e0605f]" />
    <button aria-label="Capture comment" className="ml-[10px]">
      <svg width="14" height="15" viewBox="0 0 14 15">
        <path d="M0 1h11v14H0z" fill="#f2f2ee" />
        <path d="M0 1h11v3H0z" fill="#4a9ed8" />
        <path d="M2 7h6M2 9.500h4M2 12h6" stroke="#999" />
        <path d="M4 11l1-3 7-8 2 1.500L7 10z" fill="#444" stroke="#222" strokeWidth=".5" />
      </svg>
    </button>
    <span className="ml-[17px] flex-1">botnet_pcap_file.dat</span>
    <Grip />
    <span className="w-[430px] pl-[11px]">Packets: 54536 · Displayed: 504 (0.9%)</span>
    <Grip />
    <span className="pl-[11px]">Profile: Default</span>
  </footer>
);

const Wireshark = () => (
  <div className="flex flex-1 flex-col bg-[#23252e] text-[#f2f2f0]">
    <SharkTitle />
    <SharkMenu />
    <SharkToolbar />
    <FilterBar />
    <PacketList />
    <div className="flex h-[13px] flex-col items-center pl-[7px]">
      <div className="mr-auto mt-px h-[6px] w-[calc(100%-170px)] rounded-full bg-[#58595c]" />
      <div className="mt-[2px] w-[18px] border-t-2 border-dotted border-[#6c6d73]" />
    </div>
    <div className="ml-[6px] mr-1 flex flex-1">
      <PacketDetails />
      <div className="flex w-1 items-center justify-center">
        <Grip />
      </div>
      <PacketBytes />
    </div>
    <SharkStatus />
  </div>
);

const VmStatus = () => (
  <footer className="flex h-[30px] items-center bg-[#292929] pr-8 text-[18px]">
    <span className="flex-1 pl-px">要将输入定向到该虚拟机，请将鼠标指针移入其中或按 Ctrl+G。</span>
    <div className="flex items-center gap-[5px] pr-2">
      <Device><path d="M5 3h15l3 11v7H1v-7zM1 14h22M1 17h22" /></Device>
      <Device><circle cx="12" cy="12" r="10" /><circle cx="12" cy="12" r="2.500" /><path d="M5 12a7 7 0 0 1 7-7" /></Device>
      <Device><path d="M2 2h12v9H2zM10 9h13v9H10zM5 13h3" /><path d="M2 14v8h14" strokeDasharray="2 2" /></Device>
      <Device dim led={false}><path d="M6 8V2h12v6M6 18H2V8h20v10h-4M6 14h12v8H6z" /></Device>
      <Device><path d="M2 9h4l7-6v18l-7-6H2zM16 8c2 2 2 6 0 8M19 4c3 4 3 9 1 12" /></Device>
      <Device dim led={false}><circle cx="12" cy="11" r="9" /><circle cx="12" cy="11" r="4.500" /><circle cx="12" cy="11" r="1" /><path d="M5 22h14" /></Device>
    </div>
    <div className="h-[26px] w-[2px] bg-white" />
    <svg width="22" height="22" viewBox="0 0 22 22" className="ml-[9px]">
      <path d="M1 1h20v14l-6 6H1z" fill="#36e0cd" stroke="#7b7b7b" strokeWidth="1.500" />
      <path d="M15 21v-6h6z" fill="#2f7f78" stroke="#8b8b8b" />
    </svg>
  </footer>
);

const Taskbar = () => (
  <div className="flex h-[6px] bg-[#34444f]">
    <div className="ml-[72px] w-[432px] border-2 border-b-0 border-[#666666] bg-[#3a3837]" />
    <div className="ml-[234px] w-[67px] bg-[#5d6973]" />
  </div>
);

const App = () => (
  <div className="flex min-h-screen flex-col bg-[#292929] font-['Open_Sans','Noto_Sans_CJK_SC',sans-serif] text-white">
    <TitleBar />
    <VmToolbar />
    <div className="flex flex-1">
      <Library />
      <main className="flex min-w-0 flex-1 flex-col border-x border-b border-[#6b6b6b]">
        <VmTabs />
        <div className={`flex flex-1 flex-col ${KALI_FONT}`}>
          <KaliPanel />
          <Wireshark />
        </div>
      </main>
    </div>
    <VmStatus />
    <Taskbar />
  </div>
);

export default App;
